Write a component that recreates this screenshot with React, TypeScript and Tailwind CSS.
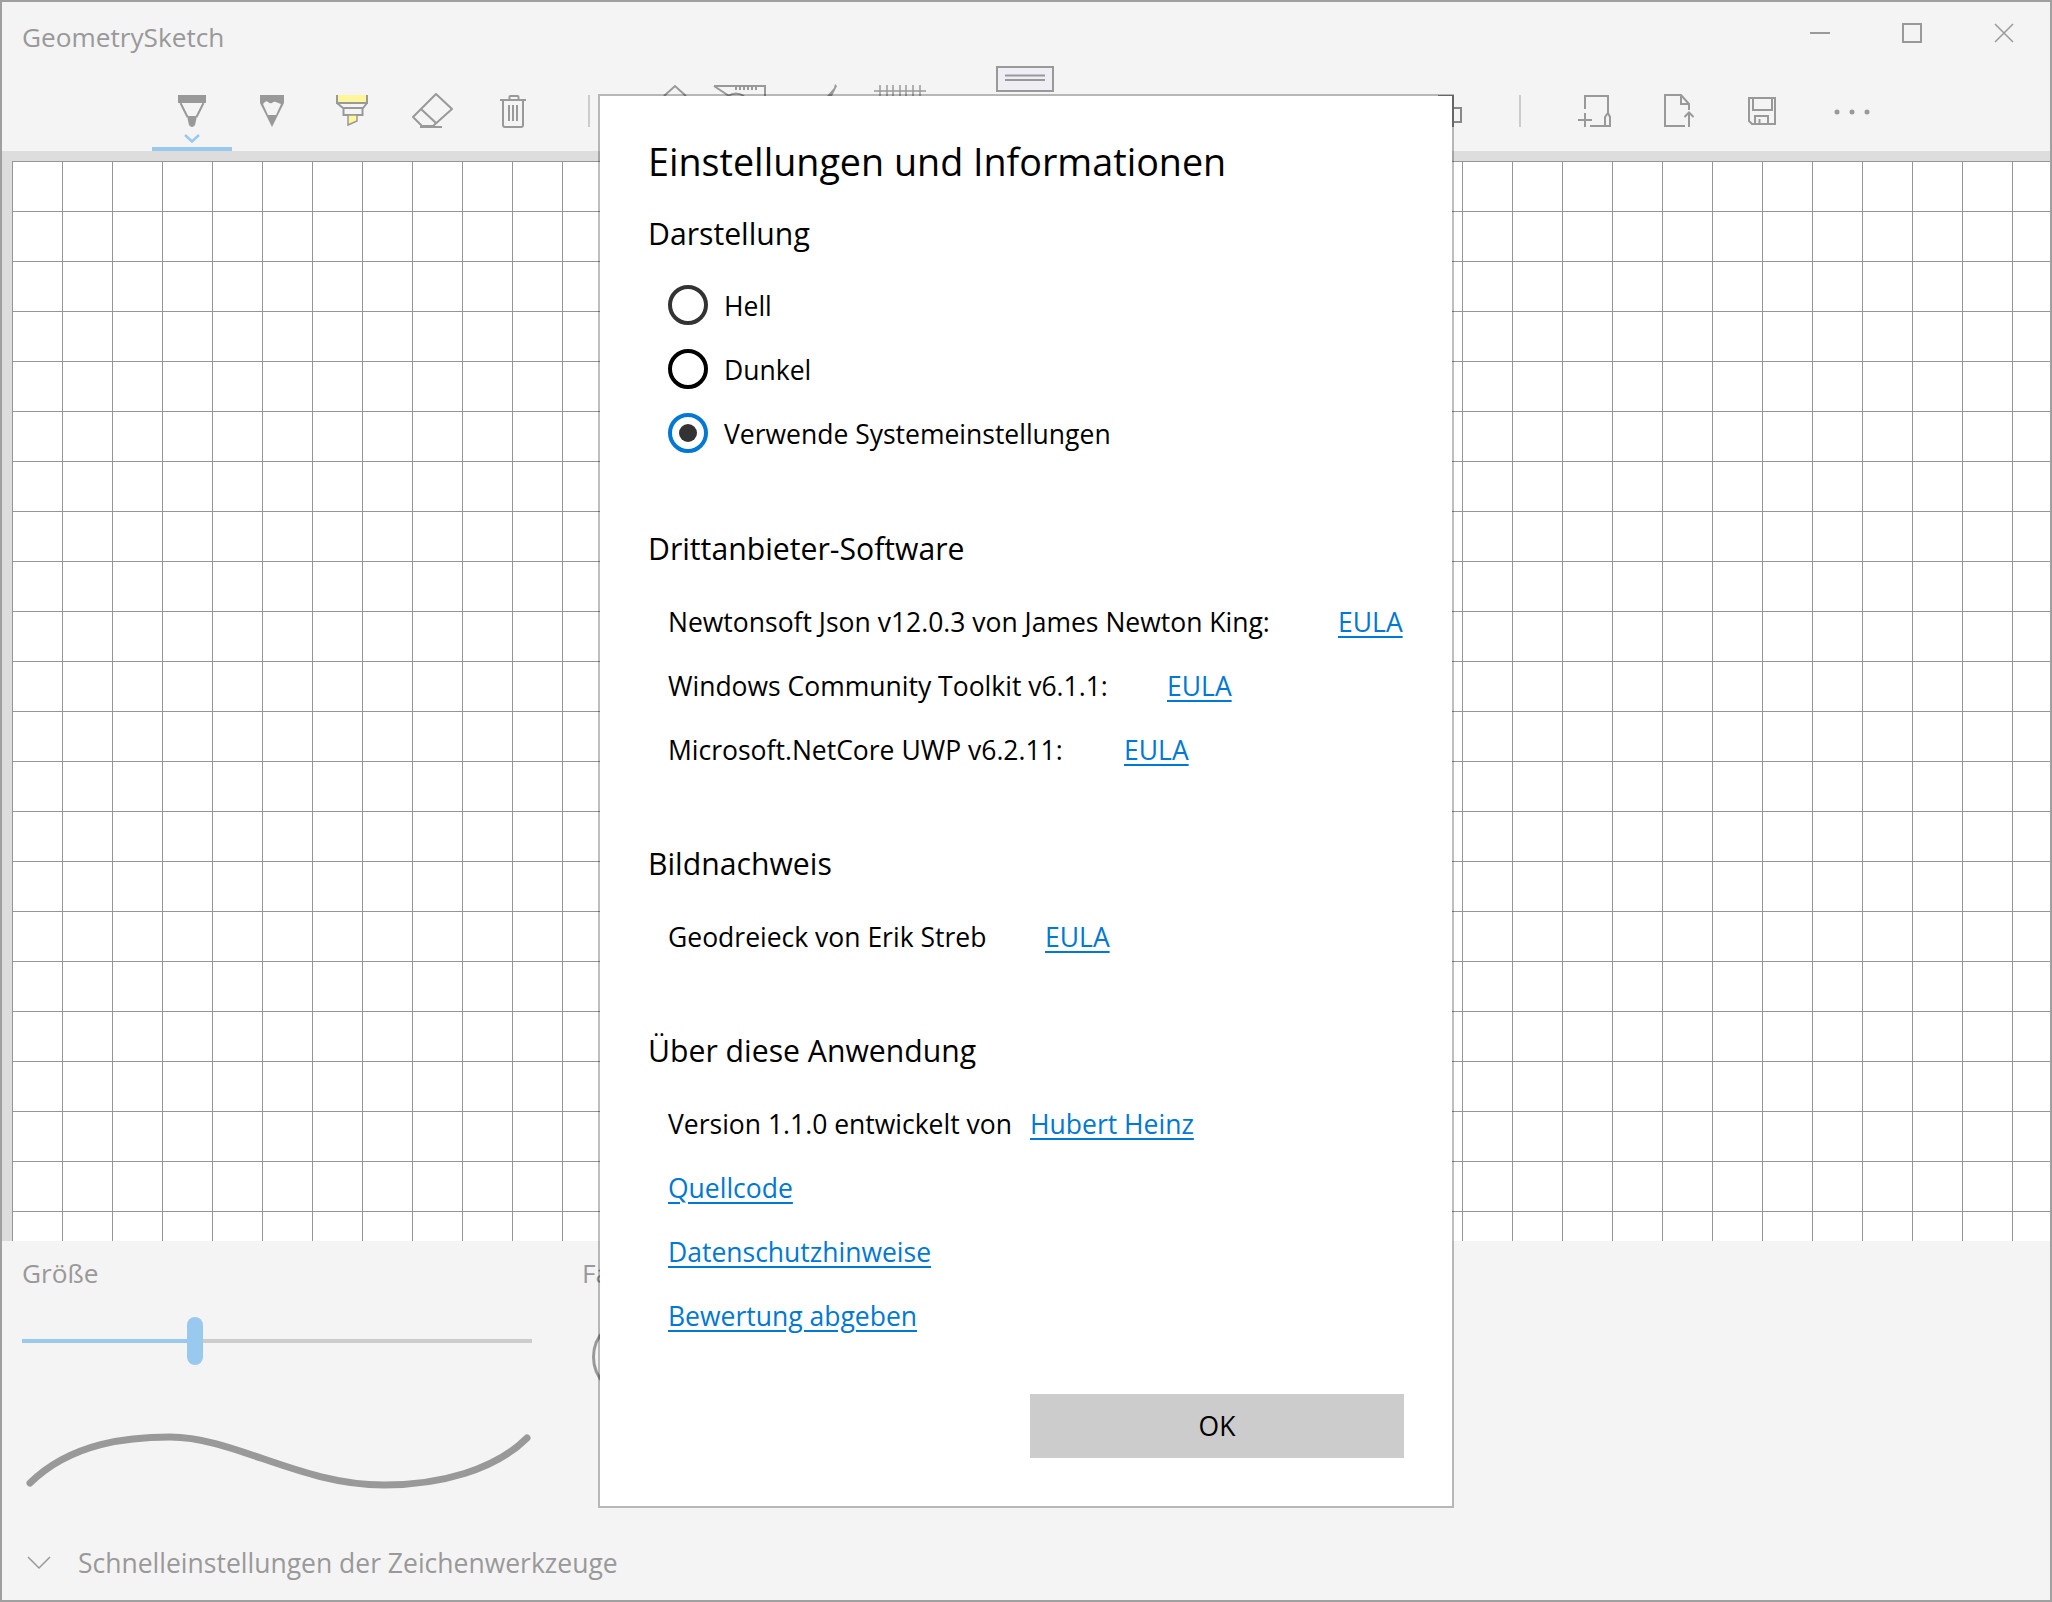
const stroke = { fill: 'none', stroke: '#999', strokeWidth: 2 };

function ToolIcon({ left, children }: { left: number; children: React.ReactNode }) {
  return (
    <svg width="80" height="40" viewBox={`${left} 93 80 40`} className="block">
      {children}
    </svg>
  );
}

function ToolButton({ left, active, children }: { left: number; active?: boolean; children: React.ReactNode }) {
  return (
    <div className="w-[80px] h-[91px] pt-[33px] flex flex-col">
      <ToolIcon left={left}>{children}</ToolIcon>
      {active && (
        <>
          <svg width="16" height="9" viewBox="0 0 16 9" className="mx-auto mt-[1px]">
            <path d="M1 1l7 6.500L15 1" fill="none" stroke="#99c9ef" strokeWidth="2.500" />
          </svg>
          <div className="h-[4px] bg-[#99c9ef] mt-auto" />
        </>
      )}
    </div>
  );
}

function Separator() {
  return <div className="w-[2px] h-[32px] mt-[35px] bg-[#ccc]" />;
}

function Radio({ label, ring }: { label: string; ring: 'hell' | 'dunkel' | 'system' }) {
  return (
    <div className="h-[64px] flex items-center pl-[20px]">
      {ring === 'hell' && <div className="w-[40px] h-[40px] rounded-full border-[4px] border-[#333]" />}
      {ring === 'dunkel' && <div className="w-[40px] h-[40px] rounded-full border-[4px] border-black" />}
      {ring === 'system' && (
        <div className="w-[40px] h-[40px] rounded-full border-[4px] border-[#0078d4] flex items-center justify-center">
          <div className="w-[18px] h-[18px] rounded-full bg-[#333]" />
        </div>
      )}
      <span className="ml-[16px] pt-[3px]">{label}</span>
    </div>
  );
}

function Row({ width, label, link }: { width?: string; label?: string; link: string }) {
  return (
    <div className="h-[64px] flex items-center pl-[20px] pt-[3px]">
      {label && <span className={width}>{label}</span>}
      <a className="text-[#0078d4] underline underline-offset-[4px]">{link}</a>
    </div>
  );
}

function Heading({ children }: { children: React.ReactNode }) {
  return <h2 className="h-[40px] leading-[36px] text-[30.2px] mb-[18px]">{children}</h2>;
}

export default function App() {
  return (
    <div className="relative w-[2052px] h-[1602px] overflow-hidden border-2 border-[#a0a0a0] bg-[#f4f4f4] font-['Open_Sans',sans-serif]">
      {/* title bar */}
      <div className="h-[58px] flex justify-between">
        <div className="pl-[20px] pt-[15px] leading-[40px] text-[26.2px] text-[#999]">GeometrySketch</div>
        <div className="flex pt-[21px]">
          <div className="w-[92px] flex justify-center">
            <svg width="20" height="20" viewBox="0 0 20 20"><path d="M0 10h20" {...stroke} /></svg>
          </div>
          <div className="w-[92px] flex justify-center">
            <svg width="20" height="20" viewBox="0 0 20 20"><rect x="1" y="1" width="18" height="18" {...stroke} /></svg>
          </div>
          <div className="w-[92px] flex justify-center">
            <svg width="20" height="20" viewBox="0 0 20 20"><path d="M1 1l18 18M19 1L1 19" {...stroke} strokeWidth="1.500" /></svg>
          </div>
        </div>
      </div>

      {/* toolbar */}
      <div className="h-[91px] pl-[150px] flex items-start">
        <ToolButton left={152} active>
          <path d="M178 95h28v8h-28z" fill="#999" />
          <path d="M180.500 103l7 14M203.500 103l-7 14" {...stroke} />
          <path d="M187 116h10l-2 9q-3 4-6 0z" fill="#999" />
        </ToolButton>
        <ToolButton left={232}>
          <path d="M260 95h24v8l-12 24-12-24z" fill="#999" />
          <path d="M263 104q3-4 5-2t4 1q2-2 4-1t5 2l-5 11h-8z" fill="#f4f4f4" />
        </ToolButton>
        <ToolButton left={312}>
          <path d="M337 95h30v7h-30z" fill="#fff59b" />
          <path d="M337 95v8h30v-8M337 103l6 5h20l4-5M343.500 108v7h19v-7" {...stroke} />
          <path d="M348 115h9v6l-9 4z" fill="#fff59b" stroke="#999" strokeWidth="1.500" />
        </ToolButton>
        <ToolButton left={392}>
          <path d="M436 94l16 15-19 17h-11l-9-9zM421 109l15 14M420 127h22" {...stroke} strokeLinejoin="round" />
        </ToolButton>
        <ToolButton left={472}>
          <path d="M500 100h26M509.500 100v-3q0-1 1-1h7q1 0 1 1v3M503 100v25q0 2 2 2h16q2 0 2-2v-25M509 105v16M513 105v16M517 105v16" {...stroke} />
        </ToolButton>
        <div className="ml-[36px]"><Separator /></div>

        {/* tools that stick out above the dialog */}
        <svg width="400" height="40" viewBox="660 60 400 40" className="ml-[70px] shrink-0">
          <path d="M664 96l11-10 11 10" {...stroke} />
          <path d="M714 86h51v12M714 86l15 10" {...stroke} />
          <path d="M735 88.500h24" stroke="#999" strokeWidth="3" strokeDasharray="2 2" fill="none" />
          <path d="M728 96q8-5 16 0" {...stroke} />
          <path d="M827 96l7-8 1-4 2 2-2 4-3 6z" fill="#999" />
          <path d="M874 91h52M880 85v11M887 85v11M893 85v11M900 85v11M906 85v11M913 85v11M920 85v11" {...stroke} strokeWidth="1.500" />
          <rect x="997" y="67" width="56" height="24" fill="#eeeef4" stroke="#999" strokeWidth="2" />
          <path d="M1005 75.500h40M1005 80h40" {...stroke} />
        </svg>

        {/* right side */}
        <div className="ml-[-60px] shrink-0 flex">
          <svg width="470" height="40" viewBox="1000 93 470 40" className="mt-[33px] shrink-0">
            <path d="M1438 96h15v31M1453 108h8v14h-8" fill="none" stroke="#888" strokeWidth="2" />
          </svg>
        </div>
        <div className="ml-[49px]"><Separator /></div>
        <div className="ml-[34px] flex">
          <ToolButton left={1555}>
            <path d="M1585 109V96h23v17M1578 120h14M1585 113v14M1590 126h20v-9l-2-4-3 4v9" {...stroke} />
          </ToolButton>
          <ToolButton left={1635}>
            <path d="M1689 110v-6l-8-9h-16v31h20M1681 95v9h8M1689 127v-14M1684.500 117l4.500-4.500 4.500 4.500" {...stroke} />
          </ToolButton>
          <ToolButton left={1715}>
            <path d="M1749 98h26v26h-23l-3-3zM1753 98v12h19V98M1755 124v-8h13v8M1759.500 124v-5" {...stroke} />
          </ToolButton>
          <ToolButton left={1795}>
            <circle cx="1837" cy="112" r="2.500" fill="#999" />
            <circle cx="1852" cy="112" r="2.500" fill="#999" />
            <circle cx="1867" cy="112" r="2.500" fill="#999" />
          </ToolButton>
        </div>
      </div>

      {/* drawing canvas */}
      <div className="h-[1090px] bg-[#ddd] pl-[10px] pt-[10px]">
        <div className="h-full bg-white bg-[linear-gradient(#969696_1px,transparent_1px),linear-gradient(90deg,#969696_1px,transparent_1px)] bg-[size:50px_50px]" />
      </div>

      {/* quick settings */}
      <div className="text-[#999] text-[26.2px]">
        <div className="flex pl-[20px] pt-[12px]">
          <div className="w-[510px] shrink-0">
            <div className="h-[40px] leading-[40px]">Größe</div>
            <div className="mt-[24px] h-[48px] flex items-center">
              <div className="w-[165px] h-[4px] bg-[#99c9ef]" />
              <div className="w-[16px] h-[48px] rounded-[8px] bg-[#99c9ef]" />
              <div className="flex-1 h-[4px] bg-[#ccc]" />
            </div>
            <svg width="510" height="65" viewBox="22 1430 510 65" className="block mt-[65px]">
              <path
                d="M30 1483C72 1442 130 1437 170 1437C234 1437 300 1485 384 1485C440 1485 495 1470 527 1438"
                fill="none"
                stroke="#999"
                strokeWidth="7"
                strokeLinecap="round"
              />
            </svg>
          </div>
          <div className="ml-[50px]">
            <div className="h-[40px] leading-[40px]">Farbe</div>
            <div className="ml-[10px] mt-[24px] w-[80px] h-[80px] rounded-full border-[3px] border-[#999]" />
          </div>
        </div>
        <div className="mt-[48px] h-[40px] pl-[25px] flex items-center leading-[40px]">
          <svg width="24" height="14" viewBox="0 0 24 14" className="shrink-0">
            <path d="M1 1l11 11L23 1" fill="none" stroke="#999" strokeWidth="1.500" />
          </svg>
          <span className="ml-[27px] text-[26.5px]">Schnelleinstellungen der Zeichenwerkzeuge</span>
        </div>
      </div>

      {/* settings dialog */}
      <div className="absolute left-[596px] top-[92px] w-[856px] h-[1414px] border-2 border-black/25 bg-white bg-clip-padding pl-[48px] pr-[48px] pt-[36px] text-[26.5px] text-black">
        <h1 className="h-[60px] leading-[60px] text-[37.7px] mb-[24px]">Einstellungen und Informationen</h1>
        <Heading>Darstellung</Heading>
        <div className="mt-[-1px]">
          <Radio label="Hell" ring="hell" />
          <Radio label="Dunkel" ring="dunkel" />
          <Radio label="Verwende Systemeinstellungen" ring="system" />
        </div>

        <div className="mt-[66px]">
          <Heading>Drittanbieter-Software</Heading>
        </div>
        <Row width="w-[670px]" label="Newtonsoft Json v12.0.3 von James Newton King:" link="EULA" />
        <Row width="w-[499px]" label="Windows Community Toolkit v6.1.1:" link="EULA" />
        <Row width="w-[456px]" label="Microsoft.NetCore UWP v6.2.11:" link="EULA" />

        <div className="mt-[65px]">
          <Heading>Bildnachweis</Heading>
        </div>
        <Row width="w-[377px]" label="Geodreieck von Erik Streb" link="EULA" />

        <div className="mt-[65px]">
          <Heading>Über diese Anwendung</Heading>
        </div>
        <Row width="w-[362px]" label="Version 1.1.0 entwickelt von" link="Hubert Heinz" />
        <Row link="Quellcode" />
        <Row link="Datenschutzhinweise" />
        <Row link="Bewertung abgeben" />

        <div className="mt-[47px] flex justify-end">
          <button className="w-[374px] h-[64px] pt-[2px] bg-[#ccc] text-[26.5px]">OK</button>
        </div>
      </div>
    </div>
  );
}
